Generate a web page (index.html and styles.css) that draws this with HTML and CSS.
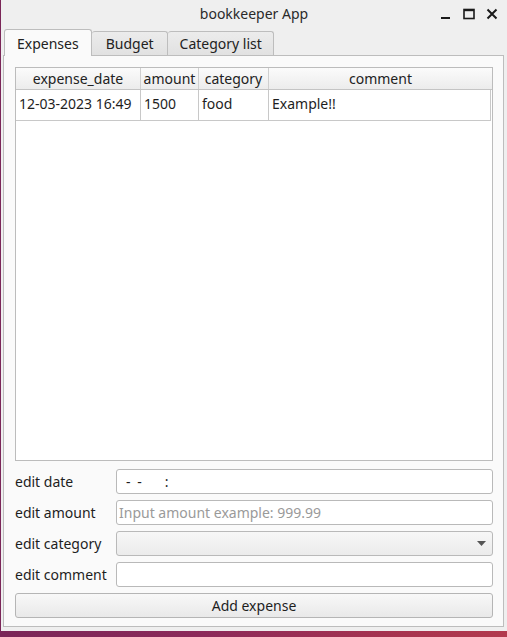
FILE: index.html
```html
<!DOCTYPE html>
<html>
<head>
<meta charset="utf-8">
<link rel="stylesheet" href="styles.css">
</head>
<body>
<div class="window">
  <div class="titlebar">
    <div></div>
    <div class="title">bookkeeper App</div>
    <div class="controls">
      <svg class="ctl" width="14" height="14" viewBox="0 0 14 14"><rect x="2" y="10" width="9" height="2" fill="#1a1a1a"/></svg>
      <svg class="ctl" width="14" height="14" viewBox="0 0 14 14"><rect x="2" y="2.5" width="10" height="9" fill="none" stroke="#1a1a1a" stroke-width="1.6"/><rect x="2" y="2" width="10" height="2.2" fill="#1a1a1a"/></svg>
      <svg class="ctl" width="14" height="14" viewBox="0 0 14 14"><path d="M2.5 2.5 L11.5 11.5 M11.5 2.5 L2.5 11.5" stroke="#1a1a1a" stroke-width="2"/></svg>
    </div>
  </div>
  <div class="tabs">
    <div class="tab active">Expenses</div>
    <div class="tab">Budget</div>
    <div class="tab">Category list</div>
  </div>
  <div class="pane">
    <div class="table">
      <div class="thead">
        <div class="th c1">expense_date</div>
        <div class="th c2">amount</div>
        <div class="th c3">category</div>
        <div class="th c4">comment</div>
      </div>
      <div class="trow">
        <div class="td c1">12-03-2023 16:49</div>
        <div class="td c2">1500</div>
        <div class="td c3">food</div>
        <div class="td c4">Example!!</div>
      </div>
    </div>
    <div class="form">
      <div class="frow"><div class="label">edit date</div><div class="input date"><span class="mask">- -</span><span class="mask colon">:</span></div></div>
      <div class="frow"><div class="label">edit amount</div><div class="input placeholder">Input amount example: 999.99</div></div>
      <div class="frow"><div class="label">edit category</div><div class="input combo"><svg width="9" height="5" viewBox="0 0 9 5"><path d="M0 0 H9 L4.5 5 Z" fill="#555"/></svg></div></div>
      <div class="frow"><div class="label">edit comment</div><div class="input"></div></div>
      <div class="button">Add expense</div>
    </div>
  </div>
</div>
</body>
</html>
```
FILE: styles.css
```css
html, body {
  margin: 0;
  padding: 0;
}
body {
  width: 507px;
  height: 637px;
  overflow: hidden;
  background: linear-gradient(90deg, #7a2658 0%, #8c2a5a 40%, #a8344f 80%, #b23a4e 100%);
  font-family: "Noto Sans", "DejaVu Sans", sans-serif;
  font-size: 14px;
  color: #1e1e1e;
}
.window {
  margin-left: 1px;
  width: 506px;
  height: 631px;
  background: #efefef;
  display: flex;
  flex-direction: column;
}
.titlebar {
  height: 29px;
  display: grid;
  grid-template-columns: 1fr auto 1fr;
  align-items: center;
}
.title {
  font-size: 14px;
  color: #2a2a2a;
  margin-top: -3px;
}
.controls {
  display: flex;
  justify-content: flex-end;
  gap: 9px;
  padding-right: 8px;
  margin-top: -2px;
}
.ctl {
  display: block;
}
.tabs {
  display: flex;
  align-items: flex-end;
  padding-left: 3px;
  height: 26px;
  position: relative;
  z-index: 1;
}
.tab {
  height: 24px;
  box-sizing: border-box;
  border: 1px solid #bdbdbd;
  border-bottom: none;
  border-left: none;
  border-radius: 3px 3px 0 0;
  background: linear-gradient(#ececec, #e1e1e1);
  padding: 0 11px 0 12px;
  line-height: 24px;
  color: #222;
}
.tab.active {
  height: 27px;
  margin-bottom: -1px;
  background: #fafafa;
  border-left: 1px solid #bdbdbd;
  line-height: 27px;
  padding: 0 12px;
}
.tab:nth-child(2) { padding: 0 13px 0 14px; }
.pane {
  margin-left: 2px;
  width: 501px;
  height: 572px;
  box-sizing: border-box;
  border: 1px solid #bdbdbd;
  background: #fafafa;
  padding: 11px 10px 8px 11px;
  display: flex;
  flex-direction: column;
  gap: 8px;
}
.table {
  height: 394px;
  box-sizing: border-box;
  border: 1px solid #bcbcbc;
  background: #fff;
  display: flex;
  flex-direction: column;
}
.thead {
  height: 21px;
  display: flex;
  background: linear-gradient(#fbfbfb, #ececec);
  border-bottom: 1px solid #c4c4c4;
}
.th {
  text-align: center;
  line-height: 21px;
  border-right: 1px solid #cfcfcf;
  box-sizing: border-box;
  color: #222;
}
.trow {
  height: 30px;
  display: flex;
  border-bottom: 1px solid #c8c8c8;
  margin-right: 1px;
}
.td {
  line-height: 28px;
  padding-left: 3px;
  border-right: 1px solid #c8c8c8;
  box-sizing: border-box;
  white-space: nowrap;
}
.c1 { width: 125px; }
.c2 { width: 58px; }
.c3 { width: 70px; }
.c4 { flex: 1; }
.thead .c4 { border-right: none; }
.form {
  display: flex;
  flex-direction: column;
  gap: 6px;
}
.frow {
  display: flex;
  align-items: center;
  height: 25px;
}
.label {
  width: 101px;
  flex: none;
}
.input {
  flex: 1;
  height: 25px;
  box-sizing: border-box;
  border: 1px solid #b9b9b9;
  border-radius: 3px;
  background: #fff;
  line-height: 23px;
  padding-left: 2px;
}
.input.date {
  padding-left: 9px;
  display: flex;
}
.mask {
  white-space: pre;
  word-spacing: 3px;
}
.mask.colon {
  margin-left: 23px;
}
.input.placeholder {
  color: #9a9a9a;
}
.input.combo {
  background: linear-gradient(#f7f7f7, #ebebeb);
  display: flex;
  justify-content: flex-end;
  align-items: center;
  padding-right: 6px;
}
.combo svg { display: block; }
.button {
  height: 25px;
  box-sizing: border-box;
  border: 1px solid #b5b5b5;
  border-radius: 3px;
  background: linear-gradient(#f8f8f8, #e9e9e9);
  text-align: center;
  line-height: 23px;
}
```
